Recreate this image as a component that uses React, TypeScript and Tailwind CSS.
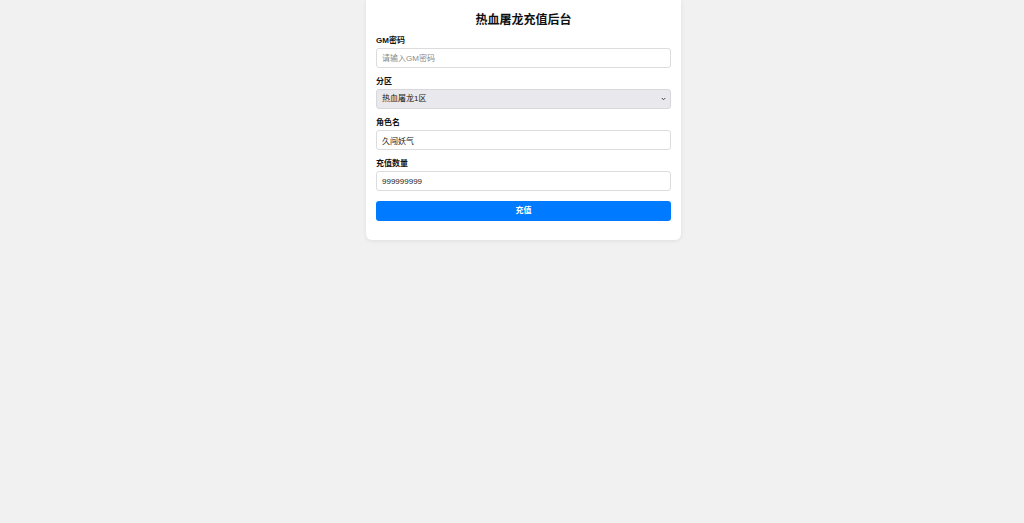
export default function App() {
  const fieldCls =
    'block w-full h-[20px] rounded-[3px] border border-[#dcdcdc] bg-white px-[5px] text-[8px] text-[#222] outline-none placeholder:text-[#8a8a8a]';
  const labelCls = 'block h-[10px] leading-[10px] text-[8px] font-bold text-[#111] mb-[2px]';

  return (
    <div className="min-h-[523px] bg-[#f1f1f1] font-['Liberation_Sans','Noto_Sans_CJK_SC',sans-serif] flex justify-center pl-[23px]">
      <div className="w-[315px] self-start bg-white rounded-b-[6px] shadow-[0_1px_4px_rgba(0,0,0,0.08)] px-[10px] pt-[12px] pb-[19px]">
        <h1 className="text-center text-[12px] leading-[16px] font-bold text-[#111] mb-[8px]">热血屠龙充值后台</h1>

        <div className="mb-[9px]">
          <label className={labelCls}>GM密码</label>
          <input className={fieldCls} placeholder="请输入GM密码" type="password" />
        </div>

        <div className="mb-[9px]">
          <label className={labelCls}>分区</label>
          <div className="relative">
            <select className="block w-full h-[20px] appearance-none rounded-[3px] border border-[#d8d8dc] bg-[#e9e9ed] px-[5px] text-[8px] text-[#222] outline-none">
              <option>热血屠龙1区</option>
            </select>
            <svg
              className="absolute right-[5px] top-[8px] w-[5px] h-[4px] pointer-events-none"
              viewBox="0 0 10 8"
              fill="none"
              stroke="#444"
              strokeWidth="2"
            >
              <path d="M1.5 2 L5 5.5 L8.5 2" />
            </svg>
          </div>
        </div>

        <div className="mb-[9px]">
          <label className={labelCls}>角色名</label>
          <input className={fieldCls} defaultValue="久闯妖气" />
        </div>

        <div className="mb-[10px]">
          <label className={labelCls}>充值数量</label>
          <input className={fieldCls} defaultValue="999999999" />
        </div>

        <button className="block w-full h-[20px] rounded-[3px] bg-[#007bff] text-white text-[8px] font-bold">充值</button>
      </div>
    </div>
  );
}
